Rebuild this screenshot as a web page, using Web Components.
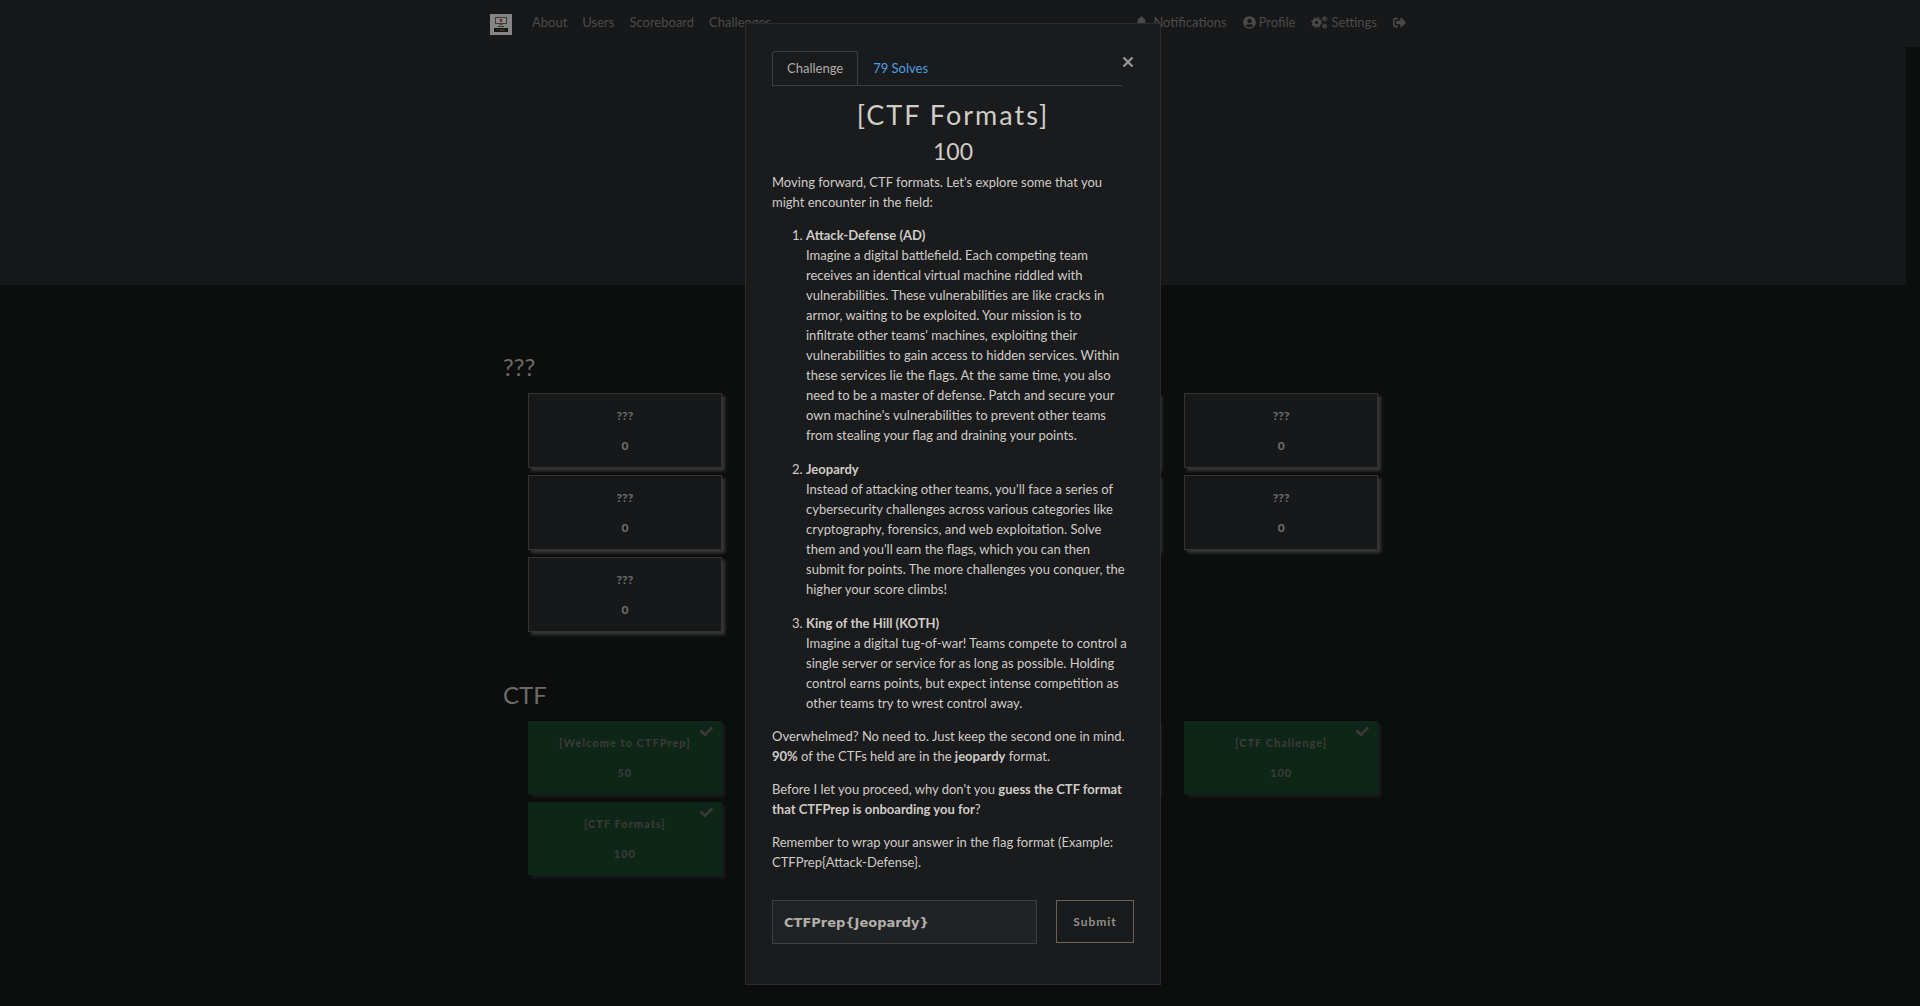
<!DOCTYPE html>
<html lang="en">
<head>
<meta charset="utf-8">
<title>CTFPrep</title>
<style>
  html { background: #0c0e0d; }
  body { margin: 0; color: #d0ccc6; font: 13px/20px Lato, "Open Sans", sans-serif; min-height: 100vh; }
</style>
</head>
<body>
<ctf-nav></ctf-nav>
<main>
  <ctf-hero></ctf-hero>
  <ctf-board>
    <ctf-category name="???">
      <ctf-card name="???" points="0"></ctf-card>
      <ctf-card name="" points=""></ctf-card>
      <ctf-card name="" points=""></ctf-card>
      <ctf-card name="???" points="0"></ctf-card>
      <ctf-card name="???" points="0"></ctf-card>
      <ctf-card name="" points=""></ctf-card>
      <ctf-card name="" points=""></ctf-card>
      <ctf-card name="???" points="0"></ctf-card>
      <ctf-card name="???" points="0"></ctf-card>
    </ctf-category>
    <ctf-category name="CTF" solved>
      <ctf-card solved name="[Welcome to CTFPrep]" points="50"></ctf-card>
      <ctf-card solved name="" points=""></ctf-card>
      <ctf-card solved name="" points=""></ctf-card>
      <ctf-card solved name="[CTF Challenge]" points="100"></ctf-card>
      <ctf-card solved name="[CTF Formats]" points="100"></ctf-card>
    </ctf-category>
  </ctf-board>
</main>
<ctf-modal name="[CTF Formats]" points="100" solves="79">
  <ctf-description></ctf-description>
  <ctf-answer slot="answer" value="CTFPrep{Jeopardy}"></ctf-answer>
</ctf-modal>

<script>
const define = (tag, render) => customElements.define(tag, class extends HTMLElement {
  connectedCallback() {
    if (this.shadowRoot) return;
    this.attachShadow({ mode: 'open' }).innerHTML = render(this);
  }
});

const gear = (x, y, r, w) => `<g fill="none" stroke="currentColor">
  <circle cx="${x}" cy="${y}" r="${r}" stroke-width="${w}"/>
  <circle cx="${x}" cy="${y}" r="${r + w * .65}" stroke-width="${w * .5}" pathLength="16" stroke-dasharray="1.1 .9"/></g>`;
const icons = {
  bell: ['0 0 448 512', '<path d="M224 512c35.32 0 63.97-28.65 63.97-64H160.03c0 35.35 28.65 64 63.97 64zm215.39-149.71c-19.32-20.76-55.47-51.99-55.47-154.29 0-77.7-54.48-139.9-127.94-155.16V32c0-17.67-14.32-32-31.98-32s-31.98 14.33-31.98 32v20.84C118.56 68.1 64.08 130.3 64.08 208c0 102.3-36.15 133.53-55.47 154.29-6 6.45-8.66 14.16-8.61 21.71.11 16.4 12.98 32 32.1 32h383.8c19.12 0 32-15.6 32.1-32 .05-7.55-2.61-15.27-8.61-21.71z"/>', 11],
  user: ['0 0 496 512', '<path d="M248 8C111 8 0 119 0 256s111 248 248 248 248-111 248-248S385 8 248 8zm0 96c48.6 0 88 39.4 88 88s-39.4 88-88 88-88-39.4-88-88 39.4-88 88-88zm0 344c-58.7 0-111.3-26.6-146.5-68.2 18.8-35.4 55.6-59.8 98.5-59.8 2.4 0 4.8.4 7.1 1.1 13 4.2 26.6 6.9 40.9 6.9 14.3 0 28-2.7 40.9-6.9 2.3-.7 4.7-1.1 7.1-1.1 42.9 0 79.7 24.4 98.5 59.8C359.3 421.4 306.7 448 248 448z"/>', 13],
  cogs: ['0 0 640 512', gear(205, 256, 118, 104) + gear(525, 110, 56, 54) + gear(525, 402, 56, 54), 17],
  out: ['0 0 512 512', '<path d="M497 273L329 441c-15 15-41 4.5-41-17v-96H152c-13.3 0-24-10.7-24-24v-96c0-13.3 10.7-24 24-24h136V88c0-21.4 25.9-32 41-17l168 168c9.3 9.4 9.3 24.6 0 34zM192 436v-40c0-6.6-5.4-12-12-12H96c-17.7 0-32-14.3-32-32V160c0-17.7 14.3-32 32-32h84c6.6 0 12-5.4 12-12V76c0-6.6-5.4-12-12-12H96c-53 0-96 43-96 96v192c0 53 43 96 96 96h84c6.6 0 12-5.4 12-12z"/>', 13],
  check: ['0 0 512 512', '<path d="M173.898 439.404l-166.4-166.4c-9.997-9.997-9.997-26.206 0-36.204l36.203-36.204c9.997-9.998 26.207-9.998 36.204 0L192 312.69 432.095 72.596c9.997-9.997 26.207-9.997 36.204 0l36.203 36.204c9.997 9.997 9.997 26.206 0 36.204l-294.4 294.401c-9.998 9.997-26.207 9.997-36.204-.001z"/>', 13]
};

define('ctf-icon', el => {
  const [box, shape, width] = icons[el.getAttribute('name')];
  return `<style>:host{display:block} svg{display:block;fill:currentColor}</style>
  <svg viewBox="${box}" width="${width}" height="13" aria-hidden="true">${shape}</svg>`;
});

define('ctf-nav', () => `
<style>
  :host { display: block; background: #17181a; color: #4c4a48; }
  nav { box-sizing: border-box; max-width: 960px; height: 47px; margin: 0 auto; padding: 12px 34px 0 10px; display: flex; align-items: flex-start; }
  a { color: inherit; text-decoration: none; display: flex; align-items: center; gap: 3px; min-height: 20px; }
  .logo { margin: 2px 20px 0 0; }
  .logo svg { display: block; }
  ul { list-style: none; margin: 0; padding: 0; display: flex; gap: 15px; font-size: 13px; line-height: 20px; }
  .right { margin-left: auto; gap: 16px; }
  .bell { gap: 6px; }
</style>
<nav>
  <a class="logo" href="#" aria-label="CTFPrep">
    <svg width="22" height="21" viewBox="0 0 22 21">
      <rect width="22" height="21" fill="#858585"/>
      <rect x="5" y="3" width="12" height="7" fill="#3a3a3a"/>
      <rect x="6" y="4" width="10" height="5" fill="#8d8987"/>
      <path d="M9 5h4l-1 1v2h-2V6z" fill="#6e2f35"/>
      <rect x="9" y="10" width="4" height="1" fill="#555"/>
      <rect x="8" y="12" width="6" height="1" fill="#333"/>
      <path d="M4 14h14v4H4z" fill="#171712"/>
      <path d="M7 16h1m2 0h5" stroke="#55542d"/>
    </svg>
  </a>
  <ul>
    <li><a href="#">About</a></li><li><a href="#">Users</a></li><li><a href="#">Scoreboard</a></li><li><a href="#">Challenges</a></li>
  </ul>
  <ul class="right">
    <li><a class="bell" href="#"><ctf-icon name="bell"></ctf-icon>Notifications</a></li>
    <li><a href="#"><ctf-icon name="user"></ctf-icon>Profile</a></li>
    <li><a href="#"><ctf-icon name="cogs"></ctf-icon>Settings</a></li>
    <li><a href="#" aria-label="Logout"><ctf-icon name="out"></ctf-icon></a></li>
  </ul>
</nav>`);

define('ctf-hero', () => `
<style>:host { display: block; height: 238px; margin-right: 14px; background: #17181a; }</style>`);

define('ctf-board', () => `
<style>
  :host { display: block; margin-right: 14px; }
  div { box-sizing: border-box; max-width: 900px; margin: 0 auto; padding: 67px 0 40px; }
</style>
<div><slot></slot></div>`);

define('ctf-category', el => `
<style>
  :host { display: block; margin-bottom: 48px; color: #6d6b68; }
  h3 { margin: 0 0 12px; font-size: 24px; line-height: 29px; font-weight: 400; }
  div { display: grid; grid-template-columns: repeat(4, 1fr); gap: ${el.hasAttribute('solved') ? 8 : 7}px 25px; padding: 0 25px; }
</style>
<h3>${el.getAttribute('name')}</h3><div><slot></slot></div>`);

define('ctf-card', el => {
  const solved = el.hasAttribute('solved');
  return `
<style>
  :host { display: block; }
  button { position: relative; display: block; box-sizing: border-box; width: 100%; padding: 12px; border: 1px solid #37322e; background: #17181a; color: #6d6b68;
    box-shadow: 3px 3px 3px #34373a; font: 900 12px/19px Lato, sans-serif; letter-spacing: 0; }
  button.solved { border: 0; background: #0e2617; color: #3a3a38; box-shadow: 3px 3px 3px #1b1c1f; font-size: 11px; letter-spacing: 1px; }
  p { margin: 0 0 11px; min-height: 19px; }
  p + p { margin: 0; }
  ctf-icon { position: absolute; top: 4px; right: 9px; }
</style>
<button type="button" class="${solved ? 'solved' : ''}">
  ${solved ? '<ctf-icon name="check"></ctf-icon>' : ''}
  <p>${el.getAttribute('name')}</p><p>${el.getAttribute('points')}</p>
</button>`;
});

define('ctf-modal', el => `
<style>
  :host { position: absolute; inset: 0 14px auto 0; display: flex; justify-content: center; padding: 23px 0 22px; }
  section { box-sizing: border-box; width: 416px; padding: 27px 26px 40px; background: #1a1b1d; border: 1px solid #2c2b2a; }
  header { display: flex; align-items: flex-start; }
  .tabs { flex: 1; display: flex; border-bottom: 1px solid #3b3e40; }
  .tabs a { padding: 6px 14px 7px; line-height: 20px; border: 1px solid transparent; border-bottom: 0; border-radius: 3px 3px 0 0; text-decoration: none; color: #4f9fe0; }
  .tabs a.on { border-color: #3b3e40; color: #b0aca6; }
  .close { margin: 5px 0 0; padding: 0; width: 12px; height: 12px; border: 0; background: none; color: #96938f; }
  .close svg { display: block; }
  h2, h3 { margin: 0; font-weight: 400; text-align: center; }
  h2 { margin-top: 13px; font-size: 27px; line-height: 32px; letter-spacing: 2px; }
  h3 { margin-top: 6px; font-size: 23px; line-height: 29px; }
</style>
<section role="dialog" aria-label="Challenge">
  <header>
    <div class="tabs"><a class="on" href="#">Challenge</a><a href="#">${el.getAttribute('solves')} Solves</a></div>
    <button class="close" type="button" aria-label="Close"><svg width="12" height="12" viewBox="0 0 12 12" stroke="currentColor" stroke-width="2.4"><path d="M1.5 1.5l9 9M10.500 1.5l-9 9"/></svg></button>
  </header>
  <h2>${el.getAttribute('name')}</h2>
  <h3>${el.getAttribute('points')}</h3>
  <slot></slot>
  <slot name="answer"></slot>
</section>`);

define('ctf-description', () => `
<style>
  :host { display: block; margin-top: 6px; line-height: 20px; }
  p { margin: 0 0 13px; }
  ol { margin: 0; padding: 0 5px 0 34px; }
  li p { margin-bottom: 14px; }
  li:last-child p { margin-bottom: 13px; }
</style>
<p>Moving forward, CTF formats. Let's explore some that you might encounter in the field:</p>
<ol>
  <li><p><strong>Attack-Defense (AD)</strong><br>Imagine a digital battlefield. Each competing team receives an identical virtual machine riddled with vulnerabilities. These vulnerabilities are like cracks in armor, waiting to be exploited. Your mission is to infiltrate other teams' machines, exploiting their vulnerabilities to gain access to hidden services. Within these services lie the flags. At the same time, you also need to be a master of defense. Patch and secure your own machine's vulnerabilities to prevent other teams from stealing your flag and draining your points.</p></li>
  <li><p><strong>Jeopardy</strong><br>Instead of attacking other teams, you'll face a series of cybersecurity challenges across various categories like cryptography, forensics, and web exploitation. Solve them and you'll earn the flags, which you can then submit for points. The more challenges you conquer, the higher your score climbs!</p></li>
  <li><p><strong>King of the Hill (KOTH)</strong><br>Imagine a digital tug-of-war! Teams compete to control a single server or service for as long as possible. Holding control earns points, but expect intense competition as other teams try to wrest control away.</p></li>
</ol>
<p>Overwhelmed? No need to. Just keep the second one in mind. <strong>90%</strong> of the CTFs held are in the <strong>jeopardy</strong> format.</p>
<p>Before I let you proceed, why don't you <strong>guess the CTF format that CTFPrep is onboarding you for</strong>?</p>
<p>Remember to wrap your answer in the flag format (Example: CTFPrep{Attack-Defense}.</p>`);

define('ctf-answer', el => `
<style>
  :host { display: block; margin-top: 28px; }
  form { display: flex; gap: 19px; align-items: flex-start; }
  input { flex: 1; min-width: 0; box-sizing: border-box; height: 44px; padding: 0 11px; border: 1px solid #3b4143; border-radius: 0; background: #1f2326; color: #b3afa8; font: 700 13px/20px "DejaVu Sans", sans-serif; outline: 0; }
  button { box-sizing: border-box; width: 78px; height: 43px; padding: 0; border: 1px solid #6b6253; background: none; color: #948f87; font: 700 12px/18px Lato, sans-serif; letter-spacing: 1px; }
</style>
<form onsubmit="return false"><input type="text" aria-label="Flag" value="${el.getAttribute('value')}"><button type="submit">Submit</button></form>`);
</script>
</body>
</html>
